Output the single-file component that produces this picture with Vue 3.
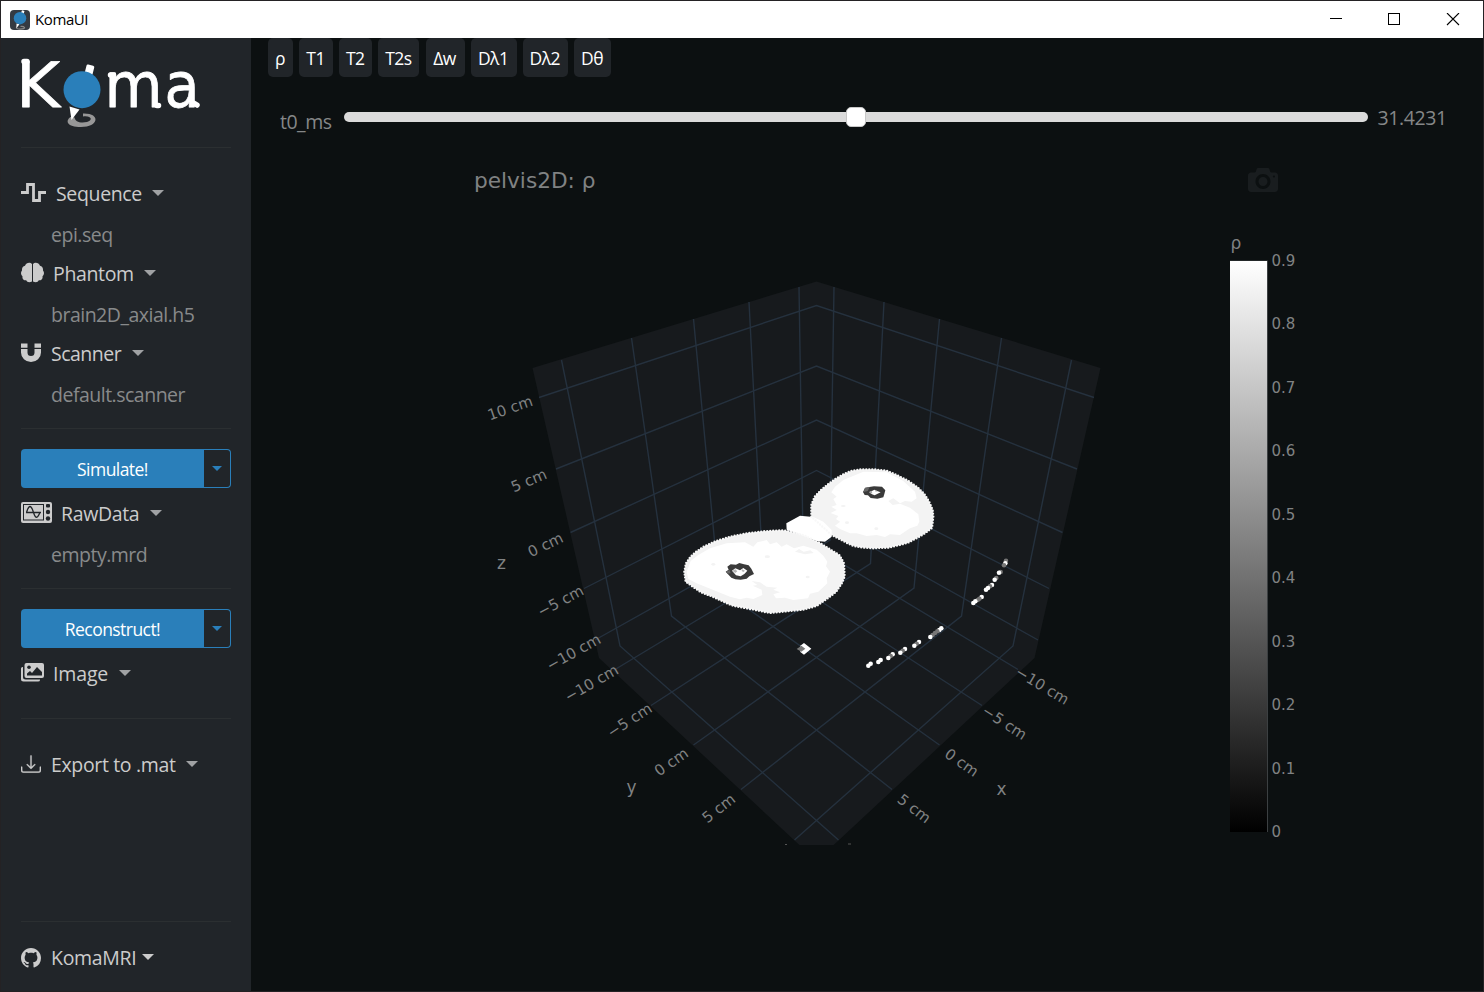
<script setup>
const tabs = [
  { label: 'ρ', w: 25 }, { label: 'T1', w: 34 }, { label: 'T2', w: 33 }, { label: 'T2s', w: 41 },
  { label: 'Δw', w: 39 }, { label: 'Dλ1', w: 46 }, { label: 'Dλ2', w: 45 }, { label: 'Dθ', w: 37 },
]

// Projected end points of the grid on the left half; the right half mirrors them.
const AXIS = 816.5
const mirror = ([x, y]) => [2 * AXIS - x, y]
const wallTop = [[561.5, 360], [631.5, 338], [693.5, 319], [749, 302], [799, 287]]
const wallBottom = [[620, 646], [671.5, 616], [719, 588], [762.5, 563.5], [803, 540]]
const floorEdge = [[838.5, 840], [892, 789.5], [939.5, 745], [982, 705.5], [1018, 669.5]]
const zEdge = [[539, 397.5], [556, 469], [570.5, 532.5], [584, 588.5], [595, 640]]
const zCorner = [305.5, 366, 420, 470.5, 516]
const path = (pts) => 'M' + pts.map((p) => p.join(' ')).join('L')
const gridLines = [
  ...wallTop.flatMap((t, i) => {
    const pts = [t, wallBottom[i], floorEdge[i]]
    return [path(pts), path(pts.map(mirror))]
  }),
  ...zEdge.map((e, i) => path([e, [AXIS, zCorner[i]], mirror(e)])),
]

const ticks = [
  { t: '10 cm', x: 510, y: 407.7, r: -19 }, { t: '5 cm', x: 528.7, y: 480.2, r: -23 },
  { t: '0 cm', x: 545.3, y: 544.5, r: -26 }, { t: '−5 cm', x: 560.3, y: 600.8, r: -28 },
  { t: '−10 cm', x: 573.5, y: 652, r: -29 }, { t: '−10 cm', x: 591.3, y: 683, r: -30 },
  { t: '−5 cm', x: 629.4, y: 720, r: -33 }, { t: '0 cm', x: 671, y: 761.7, r: -35 },
  { t: '5 cm', x: 718.5, y: 808, r: -38 }, { t: '−10 cm', x: 1042.5, y: 685.3, r: 31 },
  { t: '−5 cm', x: 1004.7, y: 722.3, r: 33 }, { t: '0 cm', x: 961.8, y: 762.3, r: 35 },
  { t: '5 cm', x: 914.4, y: 808.3, r: 38 },
]
const names = [{ t: 'z', x: 501.5, y: 563 }, { t: 'y', x: 631.5, y: 787 }, { t: 'x', x: 1001.5, y: 789 }]
const scale = ['0.9', '0.8', '0.7', '0.6', '0.5', '0.4', '0.3', '0.2', '0.1', '0']

const legRight = '424,185 424,150 434,125 452,106 471,90 496,72 521,57 546,47 575,43 610,43 650,47 680,60 714,77 743,97 763,117 778,141 788,165 790,185 786,219 763,236 739,250 714,263 690,270 655,278 610,280 570,277 545,271 485,240'
const legLeft = '43,350 48,325 61,306 76,292 101,275 136,259 180,245 230,235 280,229 330,226 350,227 400,240 450,264 509,301 522,325 524,364 516,384 498,411 469,433 440,453 400,464 340,470 300,474 270,468 230,460 190,453 160,440 130,426 95,413 71,397 47,380'
const bridge = '349,205 390,182 430,186 460,200 485,225 485,245 465,260 440,258 400,242 350,224'
const innerRight = '520,75 580,50 650,52 700,78 735,110 740,130 725,140 705,138 690,145 670,130 655,138 668,150 690,146 720,158 745,178 748,200 742,212 720,220 690,240 660,238 645,246 620,240 590,243 560,235 540,235 510,222 495,212 510,200 498,192 505,183 482,174 500,165 484,155 500,150 490,132 500,125 484,112 495,95'
const innerLeft = '50,350 62,318 85,300 120,280 170,265 225,262 250,275 262,262 290,255 300,268 320,262 335,275 350,268 372,280 400,272 440,284 460,302 472,320 468,334 480,350 470,370 472,385 445,410 420,416 414,430 370,435 345,428 318,430 310,418 330,412 310,404 322,398 290,395 270,382 245,378 262,390 248,392 275,404 277,420 250,432 230,428 210,433 180,425 130,405 80,385 55,372'

const g = '#777'
const w = '#fff'
const dots = [
  [648, 62, g], [646, 70, w], [642, 76, g], [632, 96, g], [627, 98, w], [619, 114, g], [614, 119, w],
  [606, 135, w], [600, 139, g], [594, 144, w], [588, 149, w], [575, 171, w], [568, 176, g], [563, 180, g],
  [556, 184, w], [550, 189, w], [454, 265, w], [448, 270, w], [442, 274, g], [435, 279, g], [428, 285, g],
  [421, 291, w], [387, 306, w], [380, 311, g], [373, 317, w], [345, 327, w], [338, 332, g], [331, 338, w],
  [308, 343, w], [302, 348, g], [295, 354, w], [272, 360, w], [265, 366, w], [242, 371, w], [235, 377, w],
]
</script>

<template>
  <div class="window">
    <header class="titlebar">
      <svg class="appicon" width="20" height="20" viewBox="0 0 20 20">
        <rect width="20" height="20" rx="4" fill="#343a42" />
        <path d="M7 16.500q-2 2.400 3 2.600q5-.2 4.500-1.600q-.7-1.200-4-1" fill="none" stroke="#888" stroke-width="1.200" />
        <path d="M12 .3l2.500.6-1 3-2.500-.8zM6.500 13.500l3 .8-3 3.700z" fill="#fff" />
        <circle cx="10" cy="8.200" r="6.200" fill="#2a7fba" />
      </svg>
      <span class="apptitle">KomaUI</span>
      <svg class="winbtns" width="130" height="14" viewBox="0 0 130 14" fill="none" stroke="#000" shape-rendering="crispEdges">
        <path d="M0 5.500h12" />
        <rect x="58.500" y=".5" width="11" height="11" />
        <path d="M117 0l12 12M129 0l-12 12" shape-rendering="auto" stroke-width="1.100" />
      </svg>
    </header>

    <div class="body">
      <aside class="sidebar">
        <svg class="logo" width="195" height="92" viewBox="11 38 195 92">
          <g class="logotype">
            <text x="16" y="106.500" textLength="44" lengthAdjust="spacingAndGlyphs">K</text>
            <text x="104.500" y="106.500" textLength="58" lengthAdjust="spacingAndGlyphs">m</text>
            <text x="164.500" y="106.500" textLength="35" lengthAdjust="spacingAndGlyphs">a</text>
          </g>
          <path d="M24 61.500h3M110.500 75h3M157 105.500h1.500M194.500 103.500l2.500 1.500" stroke="#fff" stroke-width="5.500" stroke-linecap="round" />
          <path d="M83 116.500C92 115.500 93 120.500 87 122C80 123.500 75 121.500 74.500 117.500L70.500 117C65 121 67 127 81 127C99 127 101 113 83 113.500z" fill="#979797" />
          <path d="M69.500 106.500l10 3-8 10.500z" fill="#fff" />
          <rect x="-4" y="-5" width="8" height="10" rx="1.500" transform="translate(89.500 70) rotate(14)" fill="#fff" />
          <circle cx="82" cy="89.700" r="18.500" fill="#2a7fba" />
        </svg>
        <hr class="rule first" />

        <div class="item">
          <svg width="25" height="20" viewBox="0 0 25 20"><path d="M0 9.500h6.500V1.500h6V17.500h6V9.500H25" fill="none" stroke="#ccc" stroke-width="2.800" /></svg>
          <span class="name s1">Sequence</span><i class="caret" />
        </div>
        <div class="file f1">epi.seq</div>
        <div class="item">
          <svg width="23" height="21" viewBox="0 0 23 20" fill="#ccc">
            <path d="M11 1.500v17.500c-2.600 1.500-5 .8-5.800-1.200C2.500 18 1 16 1.500 13.800C-.4 12-.4 9.500 1 8C.7 5.500 2 3.500 4 3.300C5 .2 9-.8 11 1.500z" />
            <path d="M12 1.500v17.500c2.600 1.500 5 .8 5.800-1.200c2.700.2 4.200-1.800 3.700-4C23.400 12 23.400 9.500 22 8c.3-2.500-1-4.500-3-4.700C18 .2 14-.8 12 1.500z" />
          </svg>
          <span class="name s2">Phantom</span><i class="caret" />
        </div>
        <div class="file f2">brain2D_axial.h5</div>
        <div class="item">
          <svg width="20" height="20" viewBox="0 0 20 20" fill="#ccc"><path d="M0 .5h6.500v4.300H0zM13.500.5H20v4.300h-6.500zM0 6h6.500v3.500a3.500 3.500 0 0 0 7 0V6H20v3.500a10 9.500 0 0 1-20 0z" /></svg>
          <span class="name s3">Scanner</span><i class="caret" />
        </div>
        <div class="file f3">default.scanner</div>
        <hr class="rule" />

        <div class="split"><button class="run r1">Simulate!</button><button class="drop"><i class="caret blue" /></button></div>
        <div class="item">
          <svg width="31" height="21" viewBox="0 0 31 21">
            <rect width="31" height="21" rx="2" fill="#ccc" />
            <rect x="2.500" y="2.500" width="20" height="15.500" fill="none" stroke="#212529" />
            <path d="M5.500 10.500c2.500-8 4.500-8 7 0s4.500 4.500 6.500 0M5 10.500h15" fill="none" stroke="#212529" stroke-width="1.300" />
            <g fill="#212529"><rect x="25" y="2" width="4" height="3.500" rx="1" /><circle cx="27" cy="10" r="2.200" /><circle cx="27" cy="16.500" r="2.200" /></g>
          </svg>
          <span class="name s4">RawData</span><i class="caret" />
        </div>
        <div class="file f4">empty.mrd</div>
        <hr class="rule" />

        <div class="split"><button class="run r2">Reconstruct!</button><button class="drop"><i class="caret blue" /></button></div>
        <div class="item">
          <svg width="23" height="19" viewBox="0 0 23 19">
            <path d="M2 4H1.500Q0 4 0 5.500V16q0 2.500 2.500 2.500H17q2 0 2-1.500v-.5H4.500Q2 16.500 2 14z" fill="#ccc" />
            <rect x="3.500" y="0" width="19.500" height="15" rx="2" fill="#ccc" />
            <path d="M6 12.500V10.500L9 8l2 2 5-6 5 5v3.500z" fill="#212529" /><circle cx="8" cy="4.300" r="1.800" fill="#212529" />
          </svg>
          <span class="name s5">Image</span><i class="caret" />
        </div>
        <hr class="rule after-image" />

        <div class="item export">
          <svg width="20" height="20" viewBox="0 0 16 16" fill="#ccc" stroke="#ccc" stroke-width=".2"><path d="M.5 9.900a.5.5 0 0 1 .5.5v2.500a1 1 0 0 0 1 1h12a1 1 0 0 0 1-1v-2.500a.5.5 0 0 1 1 0v2.500a2 2 0 0 1-2 2H2a2 2 0 0 1-2-2v-2.500a.5.5 0 0 1 .5-.5z" /><path d="M7.646 11.854a.5.5 0 0 0 .708 0l3-3a.5.5 0 0 0-.708-.708L8.500 10.293V1.500a.5.5 0 0 0-1 0v8.793L5.354 8.146a.5.5 0 1 0-.708.708l3 3z" /></svg>
          <span class="name s6">Export to .mat</span><i class="caret" />
        </div>

        <div class="foot">
          <hr class="rule foot-rule" />
          <div class="item">
            <svg class="github" width="20" height="20" viewBox="0 0 16 16" fill="#ccc"><path d="M8 0C3.580 0 0 3.580 0 8c0 3.540 2.290 6.530 5.470 7.590.4.070.55-.17.55-.38 0-.19-.01-.82-.01-1.490-2.010.37-2.530-.49-2.690-.94-.09-.23-.48-.94-.82-1.130-.28-.15-.68-.52-.01-.53.63-.01 1.080.58 1.230.82.72 1.210 1.870.87 2.330.66.070-.52.28-.87.51-1.070-1.780-.2-3.640-.89-3.640-3.950 0-.87.31-1.590.82-2.150-.08-.2-.36-1.020.08-2.120 0 0 .67-.21 2.200.82.640-.18 1.320-.27 2-.27s1.360.09 2 .27c1.530-1.040 2.200-.82 2.200-.82.44 1.100.16 1.920.08 2.120.51.56.82 1.270.82 2.150 0 3.070-1.870 3.750-3.650 3.950.29.25.54.73.54 1.480 0 1.070-.01 1.930-.01 2.200 0 .21.15.46.55.38A8.010 8.010 0 0 0 16 8c0-4.420-3.580-8-8-8z" /></svg>
            <span class="name s7">KomaMRI</span><i class="caret tight" />
          </div>
        </div>
      </aside>

      <main class="content">
        <nav class="tabs">
          <button v-for="t in tabs" :key="t.label" class="tab" :style="{ width: t.w + 'px' }">{{ t.label }}</button>
        </nav>
        <div class="slider">
          <label class="slabel">t0_ms</label>
          <div class="track"><div class="thumb" /></div>
          <span class="svalue">31.4231</span>
        </div>

        <svg class="plot" width="1232" height="841" viewBox="251 150 1232 841">
          <defs>
            <linearGradient id="gray" x1="0" y1="0" x2="0" y2="1"><stop offset="0" stop-color="#fff" /><stop offset="1" stop-color="#000" /></linearGradient>
            <clipPath id="scene"><rect x="251" y="150" width="1232" height="695" /></clipPath>
          </defs>
          <text class="title" x="474" y="188" textLength="121.500" lengthAdjust="spacingAndGlyphs">pelvis2D: ρ</text>
          <path transform="matrix(.03 0 0 -.03 1248 190.500)" fill="#191d1f" d="m500 450c-83 0-150-67-150-150 0-83 67-150 150-150 83 0 150 67 150 150 0 83-67 150-150 150z m400 150h-120c-16 0-34 13-39 29l-31 93c-6 15-23 28-40 28h-340c-16 0-34-13-39-28l-31-94c-6-15-23-28-40-28h-120c-55 0-100-45-100-100v-450c0-55 45-100 100-100h800c55 0 100 45 100 100v450c0 55-45 100-100 100z m-400-550c-138 0-250 112-250 250 0 138 112 250 250 250 138 0 250-112 250-250 0-138-112-250-250-250z m365 380c-19 0-35 16-35 35 0 19 16 35 35 35 19 0 35-16 35-35 0-19-16-35-35-35z" />

          <g clip-path="url(#scene)">
            <path d="M816.500 281.500L1100.500 368L1034.500 658L816.500 861L599 658L532.500 368z" fill="#171a1d" />
            <path v-for="(d, i) in gridLines" :key="i" :d="d" fill="none" stroke="#25313e" stroke-width="1.400" />
            <path d="M785 844.500h2M848 844h3" stroke="#555" />
          </g>
          <text v-for="(k, i) in ticks" :key="'t' + i" class="tick" text-anchor="middle" :transform="`translate(${k.x} ${k.y}) rotate(${k.r})`" y="5.500">{{ k.t }}</text>
          <text v-for="n in names" :key="n.t" class="axis" text-anchor="middle" :x="n.x" :y="n.y + 6">{{ n.t }}</text>

          <g transform="translate(670 455) scale(.33333)">
            <g class="cloud">
              <polygon :points="legRight" /><polygon :points="innerRight" class="inner" />
              <polygon :points="legLeft" /><polygon :points="innerLeft" class="inner" />
              <polygon :points="bridge" class="inner" />
            </g>
            <g class="rim"><polygon :points="legRight" /><polygon :points="legLeft" /></g>
            <g fill="#f3f3f3">
              <ellipse cx="130" cy="328" rx="6" ry="4" /><ellipse cx="413" cy="366" rx="6" ry="4" />
              <ellipse cx="292" cy="305" rx="8" ry="4" /><path d="M375 290l12-8 14 8 20-4 10 8-26 4z" />
              <ellipse cx="520" cy="153" rx="7" ry="3" /><ellipse cx="619" cy="221" rx="6" ry="4" /><ellipse cx="531" cy="203" rx="6" ry="4" />
            </g>
            <polygon class="bone" points="579,111 585,99 598,96 612,94 636,95 646,106 643,117 640,127 622,131 602,129 594,121 584,120" />
            <path d="M598 112l8-4 7-4 8 4 11 4-9 4-9 5-8-3z" fill="#fff" />
            <path d="M585 98l14-2-6 12-12 3z" fill="#666" /><path d="M598 110l7-3 2 8-7 0zM616 105l6 3-5 3z" fill="#aaa" />
            <polygon class="bone" points="167,350 176,344 172,335 182,328 198,329 208,324 222,328 236,331 244,341 252,357 238,364 230,371 212,374 196,373 184,368 174,358" />
            <path d="M186 347l10-7 14 6 10-7 12 8-9 10-11 7-14-3-6-7z" fill="#fff" />
            <path d="M168 349l11-3 3 9-10 1z" fill="#666" /><path d="M187 347l9-4 6 6-6 5zM216 343l9 4-5 4-5-3z" fill="#b5b5b5" />
          </g>
          <g transform="translate(790 540) scale(.33333)">
            <circle v-for="(d, i) in dots" :key="i" :cx="d[0]" :cy="d[1]" r="6.800" :fill="d[2]" />
            <path d="M42 309l22 17-22 18-12-9 8-8-8-9z" fill="#fff" />
            <path d="M20 327l14-10 12 9-12 9z" fill="#777" />
          </g>

          <text class="cbtitle" x="1230.500" y="249">ρ</text>
          <rect x="1230" y="260.500" width="38" height="571.500" fill="#3c4042" />
          <rect x="1230" y="261" width="37" height="571" fill="url(#gray)" />
          <text v-for="(s, i) in scale" :key="s" class="tick" x="1271.500" :y="266 + i * 63.450">{{ s }}</text>
        </svg>
      </main>
    </div>
  </div>
</template>

<style>
body { margin: 0; background: #1d1a1c; }
</style>
<style scoped>
* { box-sizing: border-box; }
.window { width: 1484px; height: 992px; border: 1px solid #242224; display: flex; flex-direction: column; font-family: "Open Sans", "Noto Sans", sans-serif; overflow: hidden; }
.titlebar { height: 37px; flex: none; background: #fff; display: flex; align-items: center; padding: 0 23px 0 9px; }
.apptitle { margin-left: 5px; font-size: 15px; letter-spacing: -.4px; color: #000; padding-bottom: 1px; }
.winbtns { margin-left: auto; }
.body { flex: 1; display: flex; min-height: 0; }
.sidebar { width: 250px; flex: none; background: #212529; padding: 0 20px; display: flex; flex-direction: column; }
.logo { margin-left: -10px; flex: none; display: block; overflow: visible; }
.logotype text { font-family: "DejaVu Sans", sans-serif; font-size: 63px; fill: #fff; stroke: #fff; stroke-width: .8px; stroke-linejoin: round; }
.rule { width: 210px; height: 1px; flex: none; border: 0; margin: 14px 0 20px; background: #2b2f31; }
.rule.first { margin: 17px 0 26px; }
.rule.after-image { margin: 24px 0 26px; }
.item { height: 40px; flex: none; display: flex; align-items: center; color: #ccc; font-size: 19.500px; }
.item svg { flex: none; margin-bottom: 3px; }
.item .github { margin-bottom: 0; }
.name { margin-left: 10px; white-space: nowrap; letter-spacing: -.35px; padding-bottom: 2px; }
.s2, .s4, .s5 { margin-left: 9px; }
.s3 { letter-spacing: -.5px; }
.s5 { letter-spacing: -.15px; }
.s7 { letter-spacing: -.3px; }
.caret { width: 0; height: 0; border: 6px solid transparent; border-top-color: #a0a2a4; border-bottom: 0; margin: 0 0 3px 10.500px; }
.caret.tight { margin-left: 6px; border-top-color: #ccc; }
.caret.blue { margin: 0 0 1px; border-width: 5px 5px 0; border-top-color: #2a7fba; }
.file { height: 40px; flex: none; line-height: 40px; padding: 1px 0 0 30px; font-size: 19.500px; letter-spacing: -.5px; color: #888a8b; white-space: nowrap; }
.split { height: 39px; flex: none; display: flex; margin-bottom: 6px; }
.run { width: 183px; border: 0; border-radius: 4px 0 0 4px; background: #2a7fba; color: #fff; font: 17.500px "Open Sans", sans-serif; letter-spacing: -.55px; padding: 0; }
.drop { width: 27px; border: 1px solid #2a7fba; border-left: 0; border-radius: 0 4px 4px 0; background: transparent; display: flex; align-items: center; justify-content: center; padding: 0; }
.foot { margin-top: auto; height: 70px; }
.foot-rule { margin: 0 0 16px; }
.content { flex: 1; background: #0c1011; display: flex; flex-direction: column; }
.tabs { display: flex; gap: 6.150px; padding-left: 17px; height: 39px; flex: none; }
.tab { flex: none; border: 0; border-radius: 5px; background: #212529; color: #fff; font: 17.500px "Open Sans", "Noto Sans", sans-serif; letter-spacing: -.5px; padding: 1px 1px 0 0; white-space: nowrap; }
.slider { height: 73px; flex: none; display: flex; align-items: center; padding: 7px 0 0 29px; color: #858788; font-size: 19.500px; }
.slabel { width: 64px; padding-top: 9px; letter-spacing: -.5px; }
.track { width: 1024px; height: 10px; border-radius: 5px; background: #dbdbdb; display: flex; align-items: center; justify-content: center; margin-bottom: 1px; }
.thumb { width: 20px; height: 20px; border-radius: 5px; background: #fff; border: 1px solid #c8c8c8; }
.svalue { margin-left: 9.500px; letter-spacing: -.4px; padding-top: 1px; }
.plot { flex: none; display: block; }
.plot text { font-family: "DejaVu Sans", sans-serif; fill: #808283; }
.plot .title { font-size: 21.500px; }
.plot .tick { font-size: 15px; }
.plot .axis, .plot .cbtitle { font-size: 17px; }
.cloud polygon { fill: #f3f3f3; }
.cloud .inner { fill: #fff; }
.rim polygon { fill: none; stroke: #f8f8f8; stroke-width: 7; stroke-linecap: round; stroke-dasharray: 0 9; }
.bone { fill: #3a3a3a; }
</style>
